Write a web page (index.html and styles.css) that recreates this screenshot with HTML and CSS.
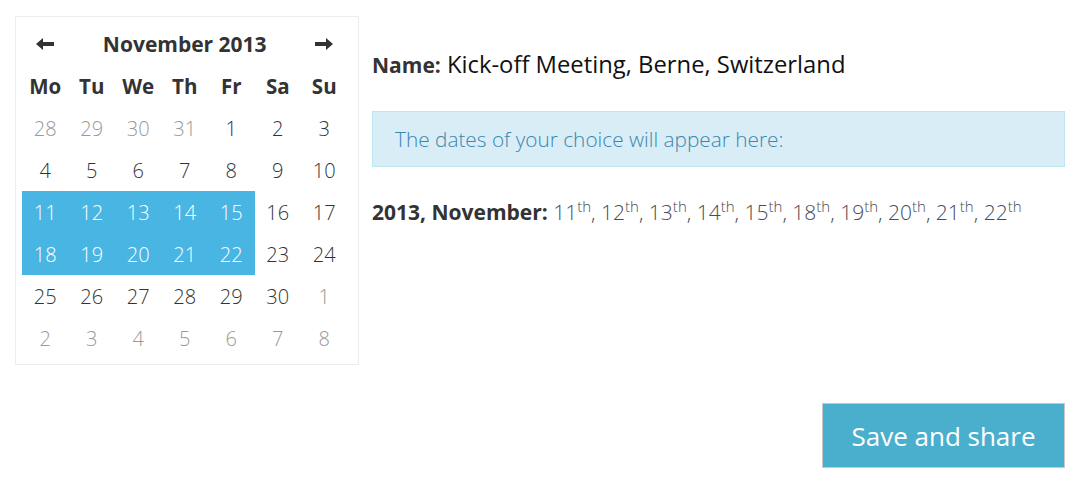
FILE: index.html
```html
<!DOCTYPE html>
<html>
<head>
<meta charset="utf-8">
<link rel="stylesheet" href="styles.css">
</head>
<body>
<div class="page">
  <div class="top">
    <div class="calendar">
      <div class="cal-grid">
        <div class="nav"><svg width="18" height="12" viewBox="0 0 18 12"><path d="M0 6 L7 0 L7 4 L18 4 L18 8 L7 8 L7 12 Z" fill="#333"/></svg></div>
        <div class="title">November 2013</div>
        <div class="nav"><svg width="18" height="12" viewBox="0 0 18 12"><path d="M18 6 L11 0 L11 4 L0 4 L0 8 L11 8 L11 12 Z" fill="#333"/></svg></div>
        <div class="dow">Mo</div><div class="dow">Tu</div><div class="dow">We</div><div class="dow">Th</div><div class="dow">Fr</div><div class="dow">Sa</div><div class="dow">Su</div>
        <div class="day old">28</div><div class="day old">29</div><div class="day old">30</div><div class="day old">31</div><div class="day">1</div><div class="day">2</div><div class="day">3</div>
        <div class="day">4</div><div class="day">5</div><div class="day">6</div><div class="day">7</div><div class="day">8</div><div class="day">9</div><div class="day">10</div>
        <div class="day sel">11</div><div class="day sel">12</div><div class="day sel">13</div><div class="day sel">14</div><div class="day sel">15</div><div class="day">16</div><div class="day">17</div>
        <div class="day sel">18</div><div class="day sel">19</div><div class="day sel">20</div><div class="day sel">21</div><div class="day sel">22</div><div class="day">23</div><div class="day">24</div>
        <div class="day">25</div><div class="day">26</div><div class="day">27</div><div class="day">28</div><div class="day">29</div><div class="day">30</div><div class="day old">1</div>
        <div class="day old">2</div><div class="day old">3</div><div class="day old">4</div><div class="day old">5</div><div class="day old">6</div><div class="day old">7</div><div class="day old">8</div>
      </div>
    </div>
    <div class="main">
      <div class="name"><b>Name:</b> Kick-off Meeting, Berne, Switzerland</div>
      <div class="alert">The dates of your choice will appear here:</div>
      <div class="dates"><b>2013, November:</b> <span class="d">11<sup>th</sup>, 12<sup>th</sup>, 13<sup>th</sup>, 14<sup>th</sup>, 15<sup>th</sup>, 18<sup>th</sup>, 19<sup>th</sup>, 20<sup>th</sup>, 21<sup>th</sup>, 22<sup>th</sup></span></div>
    </div>
  </div>
  <div class="actions">
    <button class="btn">Save and share</button>
  </div>
</div>
</body>
</html>
```
FILE: styles.css
```css
html, body {
  margin: 0;
  padding: 0;
  background: #fff;
}
body {
  font-family: "Open Sans", "Noto Sans", sans-serif;
  color: #333;
}
.page {
  padding: 16px 15px 0 15px;
}
.top {
  display: flex;
  align-items: flex-start;
  gap: 13px;
}
.calendar {
  width: 342px;
  height: 347px;
  border: 1px solid #ececec;
  flex: none;
}
.cal-grid {
  display: grid;
  grid-template-columns: repeat(7, 46.5px);
  grid-auto-rows: 42px;
  margin: 6px 0 0 6px;
}
.nav, .title, .dow, .day {
  display: flex;
  align-items: center;
  justify-content: center;
  font-size: 20px;
}
.title {
  grid-column: span 5;
  font-weight: 700;
  font-size: 21px;
}
.dow {
  font-weight: 700;
  font-size: 20.5px;
}
.day {
  font-weight: 300;
  color: #333;
}
.day.old {
  color: #999;
}
.day.sel {
  background: #49b5e3;
  color: #fff;
}
.main {
  flex: 1;
  padding-top: 34px;
}
.name {
  font-size: 23.8px;
  line-height: 28px;
  color: #111;
}
.name b {
  font-size: 21px;
  color: #333;
}
.alert {
  margin-top: 32px;
  background: #d9edf7;
  border: 1px solid #bce8f1;
  color: #3a87ad;
  font-weight: 300;
  font-size: 20.8px;
  line-height: 28px;
  padding: 13px 22px;
}
.dates {
  margin-top: 31px;
  font-size: 21px;
  line-height: 28px;
}
.dates .d {
  font-weight: 300;
  color: #4a4a55;
}
.dates sup {
  font-size: 15px;
  line-height: 0;
}
.actions {
  display: flex;
  justify-content: flex-end;
  margin-top: 38px;
}
.btn {
  width: 243px;
  height: 65px;
  background: #4aafcd;
  border: 1px solid #c8c8c8;
  color: #fff;
  font-family: "Open Sans", "Noto Sans", sans-serif;
  font-size: 26px;
  padding: 0;
}
```
